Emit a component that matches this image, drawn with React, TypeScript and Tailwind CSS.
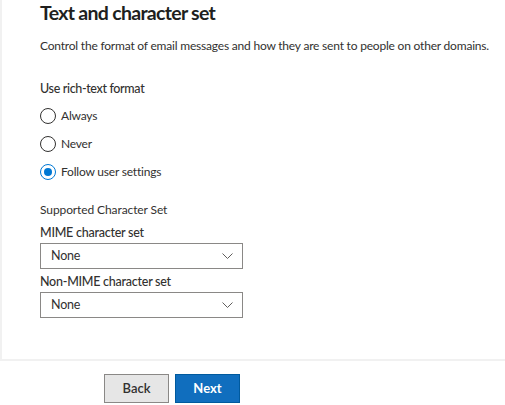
import {useState} from 'react';

const options = ['Always', 'Never', 'Follow user settings'];

function Chevron() {
  return (
    <svg width="11" height="6" viewBox="0 0 11 6" fill="none" stroke="#605e5c" strokeWidth="1">
      <path d="M0.5 0.5 L5.5 5.5 L10.5 0.5" />
    </svg>
  );
}

function Dropdown({label, value}: {label: string; value: string}) {
  return (
    <div className="flex flex-col">
      <div className="text-[12.5px] tracking-[-0.25px] leading-[17px] text-[#323130] font-medium">{label}</div>
      <div className="mt-[2px] w-[203px] h-[26px] border border-[#8a8886] flex items-center justify-between pl-[10px] pr-[9px] text-[12.5px] tracking-[-0.2px] text-[#323130]">
        <span>{value}</span>
        <Chevron />
      </div>
    </div>
  );
}

export default function App() {
  const [format, setFormat] = useState('Follow user settings');

  return (
    <div className="w-[505px] h-[405px] bg-white flex flex-col overflow-hidden" style={{fontFamily: 'Lato, "Open Sans", sans-serif'}}>
      {/* Panel body */}
      <div className="h-[361px] border-l-2 border-b-2 border-[#f1f1f1] pl-[38px] pt-[1px]">
        <h1 className="text-[19.5px] tracking-[-0.7px] leading-[24px] font-bold text-[#201f1e]">Text and character set</h1>
        <p className="mt-[13px] text-[12px] tracking-[-0.2px] leading-[16px] text-[#323130] whitespace-nowrap">
          Control the format of email messages and how they are sent to people on other domains.
        </p>

        <div className="mt-[26px] text-[12.5px] tracking-[-0.35px] leading-[17px] font-medium text-[#323130]">Use rich-text format</div>
        <div className="mt-[10px] flex flex-col gap-[11px]">
          {options.map((opt) => {
            const checked = format === opt;
            return (
              <label key={opt} className="flex items-center gap-[5px] cursor-pointer" onClick={() => setFormat(opt)}>
                <span className={`w-[16px] h-[16px] rounded-full border flex items-center justify-center ${checked ? 'border-[#0078d4]' : 'border-[#323130]'}`}>
                  {checked && <span className="w-[8px] h-[8px] rounded-full bg-[#0078d4]" />}
                </span>
                <span className="text-[12px] tracking-[-0.2px] leading-[17px] text-[#323130]">{opt}</span>
              </label>
            );
          })}
        </div>

        <div className="mt-[21px] text-[12px] tracking-[-0.1px] leading-[17px] text-[#323130]">Supported Character Set</div>
        <div className="mt-[6px] flex flex-col gap-[4px]">
          <Dropdown label="MIME character set" value="None" />
          <Dropdown label="Non-MIME character set" value="None" />
        </div>
      </div>

      {/* Footer */}
      <div className="flex gap-[6px] pl-[104px] pt-[13px]">
        <button className="w-[65px] h-[29px] bg-[#e6e6e6] border border-[#8a8886] text-[13px] font-semibold text-[#323130]">Back</button>
        <button className="w-[65px] h-[29px] bg-[#106ebe] border border-[#005a9e] text-[13px] font-bold text-white">Next</button>
      </div>
    </div>
  );
}
